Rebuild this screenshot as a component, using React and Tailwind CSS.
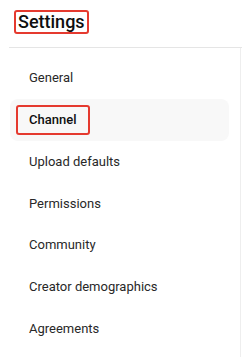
import React from "react";

const items = [
  "General",
  "Channel",
  "Upload defaults",
  "Permissions",
  "Community",
  "Creator demographics",
  "Agreements",
];

export default function App() {
  return (
    <div
      className="w-[242px] h-[357px] bg-white overflow-hidden pl-[9px] flex flex-col"
      style={{ fontFamily: "Roboto, 'Noto Sans', sans-serif" }}
    >
      <div className="h-[48px] shrink-0 border-b border-[#e5e5e5] flex items-start pt-[10px] pl-[5px]">
        <span className="border-2 border-[#e53a2f] rounded-[3px] h-[24px] px-[2px] flex items-center text-[18px] leading-none font-medium text-[#0f0f0f]">
          Settings
        </span>
      </div>
      <div className="flex-1 flex">
        <nav className="w-[232px] border-r border-[#eeeeee] pt-[9px] pl-[1px] flex flex-col">
          {items.map((label) => {
            const active = label === "Channel";
            return (
              <div
                key={label}
                className={
                  "h-[41.8px] w-[219px] flex items-center rounded-[8px] " +
                  (active ? "bg-[#f8f8f8] pl-[6px]" : "pl-[19px]")
                }
              >
                {active ? (
                  <span className="border-2 border-[#e53a2f] rounded-[3px] h-[30px] w-[74px] pl-[11px] flex items-center text-[13px] font-medium text-[#0f0f0f]">
                    {label}
                  </span>
                ) : (
                  <span className="text-[13px] text-[#282828]">{label}</span>
                )}
              </div>
            );
          })}
        </nav>
      </div>
    </div>
  );
}
